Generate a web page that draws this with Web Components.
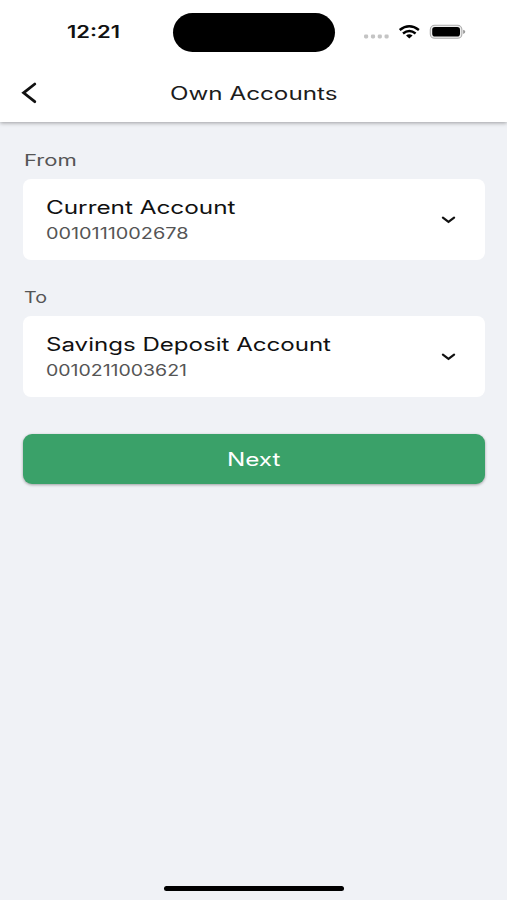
<!DOCTYPE html>
<html lang="en">
<head>
<meta charset="utf-8">
<title>Own Accounts</title>
<style>
html, body { margin: 0; height: 100%; overflow: hidden; background: #f0f2f6; font-family: Inter, "Open Sans", sans-serif; }
</style>
</head>
<body>
<transfer-screen></transfer-screen>
<script>
const define = (name, html, setup) => {
  const template = document.createElement('template');
  template.innerHTML = html;
  customElements.define(name, class extends HTMLElement {
    connectedCallback() {
      if (this.shadowRoot) return;
      this.attachShadow({ mode: 'open' }).append(template.content.cloneNode(true));
      if (setup) setup(this, this.shadowRoot);
    }
  });
};

/* Text set in an extended width: stretched horizontally to fill "width" pixels. */
define('wide-text', `
  <style>
    :host { display: block; height: 24px; line-height: 24px; white-space: nowrap; }
    span { display: inline-block; transform-origin: 0 50%; }
  </style>
  <span></span>`, (host, root) => {
  const span = root.querySelector('span');
  const width = Number(host.getAttribute('width'));
  span.textContent = host.getAttribute('text');
  host.style.width = width + 'px';
  span.style.transform = 'scaleX(' + width / span.getBoundingClientRect().width + ')';
});

define('status-bar', `
  <style>
    :host { display: grid; grid-template-columns: 173px 162px 1fr; height: 64px; color: #111; }
    wide-text { font-size: 17px; font-weight: 600; margin: 20px 0 0 66.5px; }
    .island { height: 39px; margin: 13px .4px 0 .4px; border-radius: 20px; background: #000; }
    svg { display: block; margin: 20px 0 0 28px; }
  </style>
  <wide-text text="12:21" width="53"></wide-text>
  <div class="island"></div>
  <svg width="106" height="24" viewBox="363 20 106 24">
    <g fill="#c4c4c4"><rect x="364" y="34.5" width="4.2" height="4" rx="1.4"/><rect x="370.9" y="34.5" width="4.2" height="4" rx="1.4"/><rect x="377.7" y="34.5" width="4.2" height="4" rx="1.4"/><rect x="384.5" y="34.5" width="4.2" height="4" rx="1.4"/></g>
    <g fill="none" stroke="#000" stroke-width="2.5"><path d="M399.7 30Q409.3 22.6 418.9 30"/><path d="M403 33.5Q409.3 28.6 415.6 33.5"/></g>
    <path d="M406 35.5Q409.3 33 412.6 35.5L409.3 38.4Z"/>
    <rect x="430.3" y="25.3" width="31.6" height="13" rx="4.4" fill="#eee" stroke="#aaa" stroke-width="1.1"/>
    <rect x="432.2" y="27" width="27.8" height="9.5" rx="2.8"/>
    <path d="M463.1 29.7Q465.3 30.3 465.3 31.8T463.1 33.9Z" fill="#999"/>
  </svg>`);

define('title-bar', `
  <style>
    :host { display: grid; grid-template-columns: 170px 167px 1fr; height: 58px; color: #1c1c1c; font-size: 18px; }
    svg { display: block; margin: 17px 0 0 20px; }
    slot { display: block; margin: 18px 0 0 -.5px; }
  </style>
  <svg width="20" height="24" viewBox="20 81 20 24"><path d="M34.8 84L23.6 92.8L34.8 101.7" fill="none" stroke="#111" stroke-width="2.8" stroke-linecap="round"/></svg>
  <slot></slot>`);

define('account-select', `
  <style>
    :host { display: block; height: 137.2px; }
    .label { font-size: 15.8px; color: #555; padding: 1px 0 0 .3px; }
    .card { display: flex; justify-content: space-between; align-items: center; box-sizing: border-box; height: 80.5px; margin-top: 6px; padding: 0 29px 0 22.2px; border-radius: 8px; background: #fff; }
    .name { font-size: 18.4px; color: #111; height: 27.2px; }
    .number { font-size: 15.8px; color: #555; }
    .lines { padding-top: 2.4px; }
    svg { margin-top: 1.2px; }
  </style>
  <div class="label"></div>
  <div class="card">
    <div class="lines"></div>
    <svg width="15" height="10" viewBox="0 0 15 10"><path d="M1.9 2.7L7.5 6.9L13.1 2.7" fill="none" stroke="#111" stroke-width="2.2" stroke-linecap="round"/></svg>
  </div>`, (host, root) => {
  const add = (parent, cls, text, width) => {
    const t = document.createElement('wide-text');
    t.className = cls;
    t.setAttribute('text', text);
    t.setAttribute('width', width);
    root.querySelector(parent).append(t);
  };
  const d = host.dataset;
  add('.label', 'caption', d.label, d.labelWidth);
  add('.lines', 'name', d.name, d.nameWidth);
  add('.lines', 'number', d.number, d.numberWidth);
});

define('primary-button', `
  <style>
    :host { display: flex; justify-content: center; align-items: center; height: 50px; border-radius: 9px; background: #3aa169; color: #fff; font-size: 18.4px; box-shadow: 0 1px 3px rgba(0,0,0,.35); }
  </style>
  <slot></slot>`);

define('transfer-screen', `
  <style>
    :host { display: flex; flex-direction: column; height: 900px; width: 507px; }
    header { background: #fff; box-shadow: 0 1px 4px rgba(0,0,0,.35); }
    main { flex: 1; padding: 26px 22.4px 0 23.4px; }
    primary-button { margin-top: 11.5px; }
    footer { width: 180px; height: 5px; border-radius: 3px; background: #000; margin: 0 0 8.7px 164px; }
  </style>
  <header><status-bar></status-bar><title-bar><wide-text text="Own Accounts" width="167.5"></wide-text></title-bar></header>
  <main>
    <account-select data-label="From" data-label-width="52.8" data-name="Current Account" data-name-width="189.5" data-number="0010111002678" data-number-width="142.5"></account-select>
    <account-select data-label="To" data-label-width="23" data-name="Savings Deposit Account" data-name-width="285" data-number="0010211003621" data-number-width="141"></account-select>
    <primary-button><wide-text text="Next" width="53.5"></wide-text></primary-button>
  </main>
  <footer></footer>`);
</script>
</body>
</html>
